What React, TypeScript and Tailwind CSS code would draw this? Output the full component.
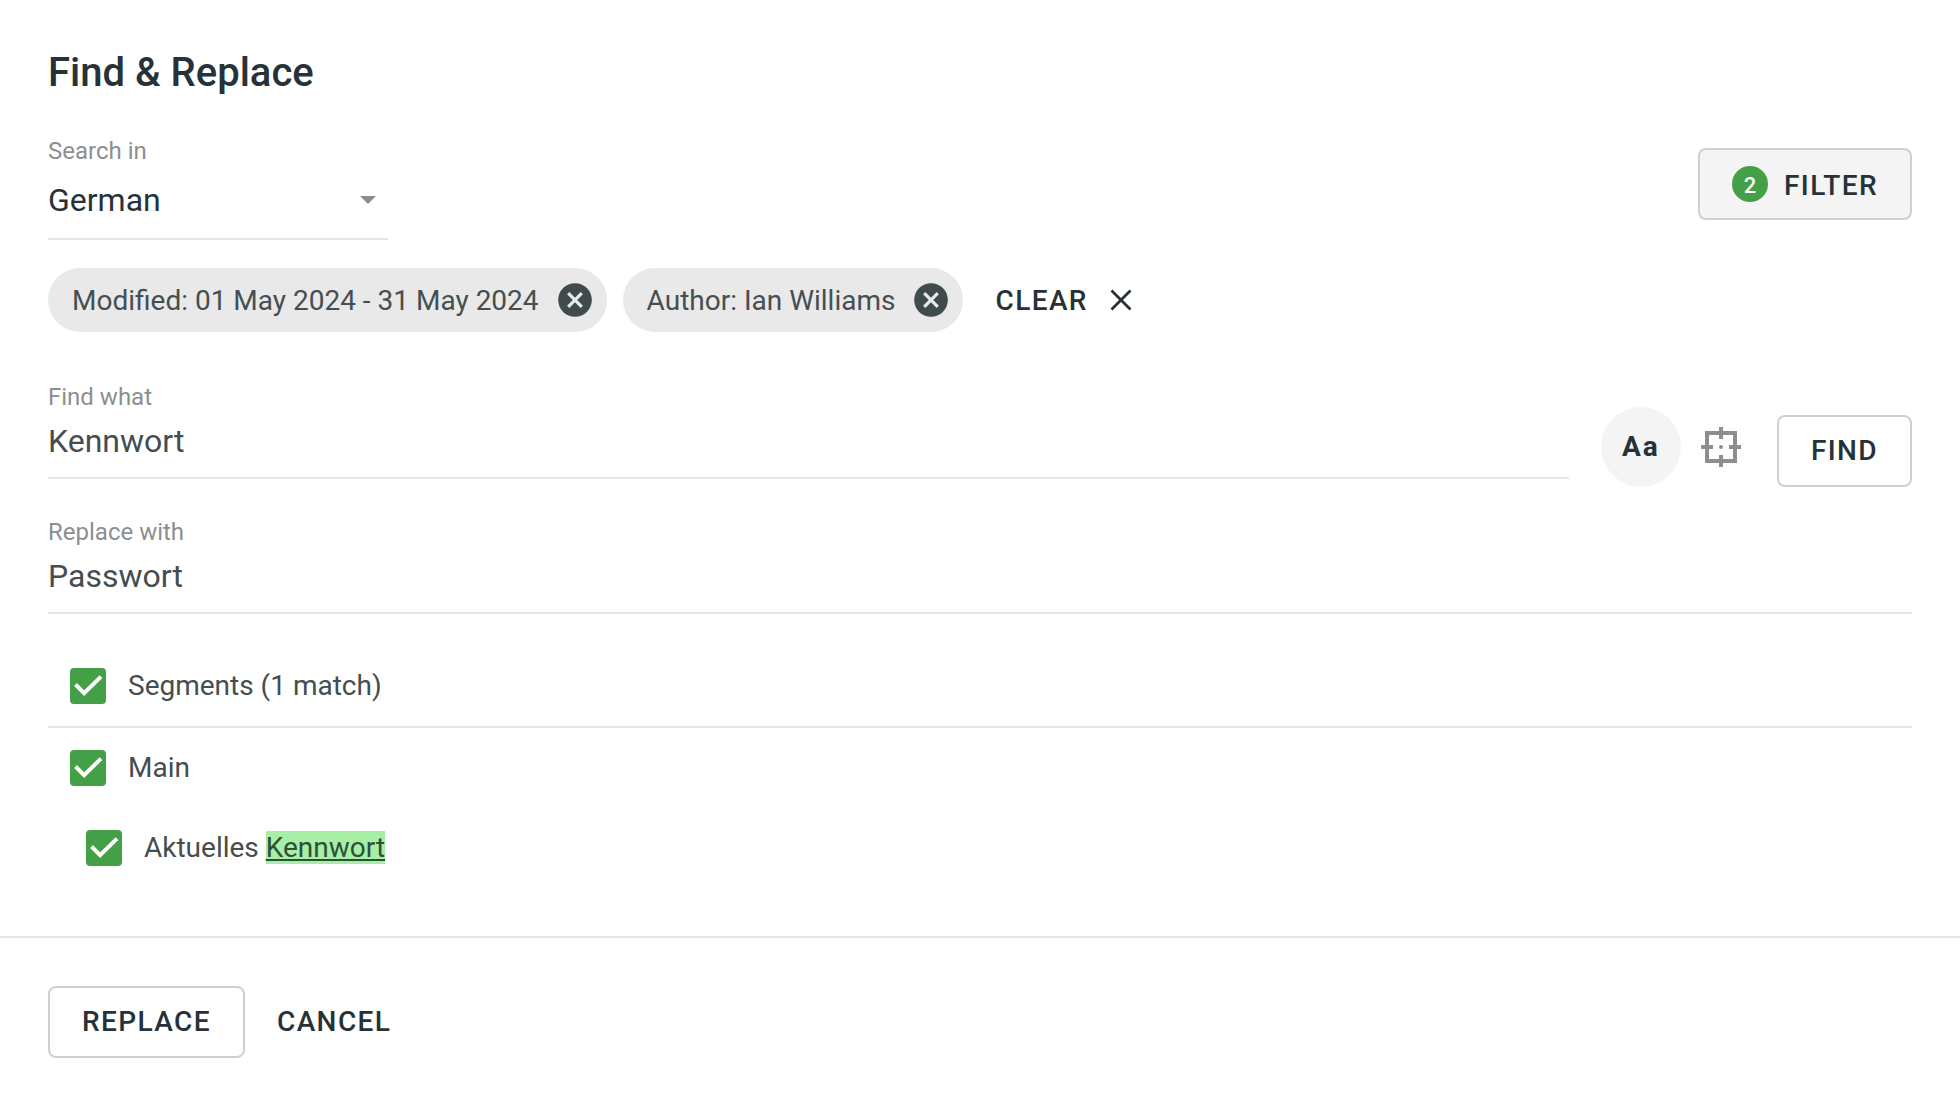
import * as React from "react"
import { useState } from "react"

const buttonBase = "flex items-center h-[72px] text-[28px] font-medium tracking-wider text-[#263238] cursor-pointer";
const outlined = "px-8 border-2 border-[#cfd1d1] rounded-lg";

const Field = ({ id, label, value, onChange }: { id: string; label: string; value: string; onChange: (value: string) => void }) => {
  return (
    <div className="flex flex-col flex-1">
      <label htmlFor={id} className="text-[24px] leading-[28px] text-[#8c8f8f]">{label}</label>
      <input
        id={id}
        type="text"
        value={value}
        onChange={e => onChange(e.target.value)}
        className="h-[68px] w-full pb-1.5 text-[32px] text-[#454d4f] border-b-2 border-[#e6e6e6] outline-none"
      />
    </div>
  )
}

const Chip = ({ label, onRemove }: { label: string; onRemove: () => void }) => {
  return (
    <li className="flex items-center h-16 gap-4 pl-6 pr-3 rounded-full bg-[#e9e9e9] text-[28px] text-[#454f51]">
      <span className="pt-0.5">{label}</span>
      <button type="button" aria-label={`Remove ${label}`} onClick={onRemove} className="cursor-pointer">
        <svg className="h-10 w-10" viewBox="0 0 40 40" fill="none">
          <circle cx="20" cy="20" r="16.8" fill="#3f4b4d" />
          <path d="M13.2 13.2l13.6 13.6M26.8 13.2l-13.6 13.6" stroke="#e9e9e9" strokeWidth="3.2" />
        </svg>
      </button>
    </li>
  )
}

const CheckRow = ({ className, children }: { className: string; children: React.ReactNode }) => {
  return (
    <label className={"flex items-center gap-[22px] text-[28px] text-[#454d4f] " + className}>
      <span className="grid h-9 w-9">
        <input
          type="checkbox"
          defaultChecked
          className="peer col-start-1 row-start-1 h-9 w-9 appearance-none rounded border-2 border-[#8c8f8f] checked:border-[#43a047] checked:bg-[#43a047]"
        />
        <svg
          className="col-start-1 row-start-1 h-9 w-9 pointer-events-none invisible peer-checked:visible"
          viewBox="0 0 36 36"
          fill="none"
          stroke="#fff"
          strokeWidth="4"
        >
          <path d="M5.5 16.5l8.6 8.6L31 8.6" />
        </svg>
      </span>
      <span>{children}</span>
    </label>
  )
}

const App = () => {
  const [find, setFind] = useState("Kennwort");
  const [replace, setReplace] = useState("Passwort");
  const [filters, setFilters] = useState(["Modified: 01 May 2024 - 31 May 2024", "Author: Ian Williams"]);

  return (
    <div className="min-h-screen bg-white font-['Roboto',sans-serif] text-[#263238]">
      <main className="p-12">
        <h1 className="text-[40px] leading-[50px] font-medium">Find &amp; Replace</h1>

        <div className="flex items-start justify-between mt-[39px]">
          <div className="flex flex-col w-[340px]">
            <label htmlFor="language" className="text-[24px] leading-[28px] text-[#8c8f8f]">Search in</label>
            <div className="grid items-center">
              <select
                id="language"
                className="col-start-1 row-start-1 h-[75px] w-full appearance-none pb-1 text-[32px] border-b-2 border-[#e6e6e6] outline-none"
              >
                <option>German</option>
              </select>
              <svg className="col-start-1 row-start-1 justify-self-end mr-3 mb-1.5 h-2 w-4 pointer-events-none" viewBox="0 0 16 8" fill="#8c8f8f">
                <path d="M0 0h16l-8 8z" />
              </svg>
            </div>
          </div>
          <button type="button" className={`${buttonBase} ${outlined} mt-[11px] gap-4 bg-[#f4f4f4]`}>
            <span className="flex items-center justify-center h-9 w-9 pt-0.5 rounded-full bg-[#43a047] text-[22px] tracking-normal text-white">
              {filters.length}
            </span>
            <span className="pt-1">FILTER</span>
          </button>
        </div>

        {/* Active filters */}
        <div className="flex items-center mt-7">
          <ul className="flex gap-4">
            {filters.map(item => (
              <Chip key={item} label={item} onRemove={() => setFilters(filters.filter(f => f !== item))} />
            ))}
          </ul>
          <button
            type="button"
            onClick={() => setFilters([])}
            className="flex items-center gap-[22px] ml-8 text-[28px] font-medium tracking-wider cursor-pointer"
          >
            <span className="pt-0.5">CLEAR</span>
            <svg className="h-[22px] w-[22px]" viewBox="0 0 22 22" fill="none" stroke="currentColor" strokeWidth="2.8">
              <path d="M1.5 1.5l19 19M20.5 1.5l-19 19" />
            </svg>
          </button>
        </div>

        <div className="flex items-end mt-[51px]">
          <div className="flex flex-1 pb-2">
            <Field id="find" label="Find what" value={find} onChange={setFind} />
          </div>
          <button
            type="button"
            aria-label="Match case"
            className="ml-8 h-20 w-20 rounded-full bg-[#f4f4f4] text-[28px] font-bold tracking-[2px] cursor-pointer"
          >
            Aa
          </button>
          <button type="button" aria-label="Whole word" className="flex items-center justify-center h-20 w-20 mr-4 cursor-pointer">
            <svg className="h-10 w-10" viewBox="0 0 40 40" fill="none" stroke="#8c8f8f" strokeWidth="4">
              <path d="M6 6h28v28H6zM20 0v12M20 28v12M0 20h12M28 20h12" />
              <circle cx="20" cy="20" r="2" fill="#8c8f8f" stroke="none" />
            </svg>
          </button>
          <button type="button" className={`${buttonBase} ${outlined}`}>FIND</button>
        </div>

        <div className="flex mt-[31px]">
          <Field id="replace" label="Replace with" value={replace} onChange={setReplace} />
        </div>

        {/* Matches */}
        <div className="mt-8">
          <CheckRow className="h-[82px] pl-[22px] border-b-2 border-[#e6e6e6]">Segments (1 match)</CheckRow>
          <CheckRow className="h-20 pl-[22px]">Main</CheckRow>
          <CheckRow className="h-20 pl-[38px]">
            Aktuelles <mark className="bg-[#a5f0a5] text-[#2f4f3c] underline">Kennwort</mark>
          </CheckRow>
        </div>
      </main>

      <footer className="flex items-center gap-8 p-12 border-t-2 border-[#e6e6e6]">
        <button type="button" className={`${buttonBase} ${outlined}`}>REPLACE</button>
        <button type="button" className={buttonBase}>CANCEL</button>
      </footer>
    </div>
  )
}

export default App
